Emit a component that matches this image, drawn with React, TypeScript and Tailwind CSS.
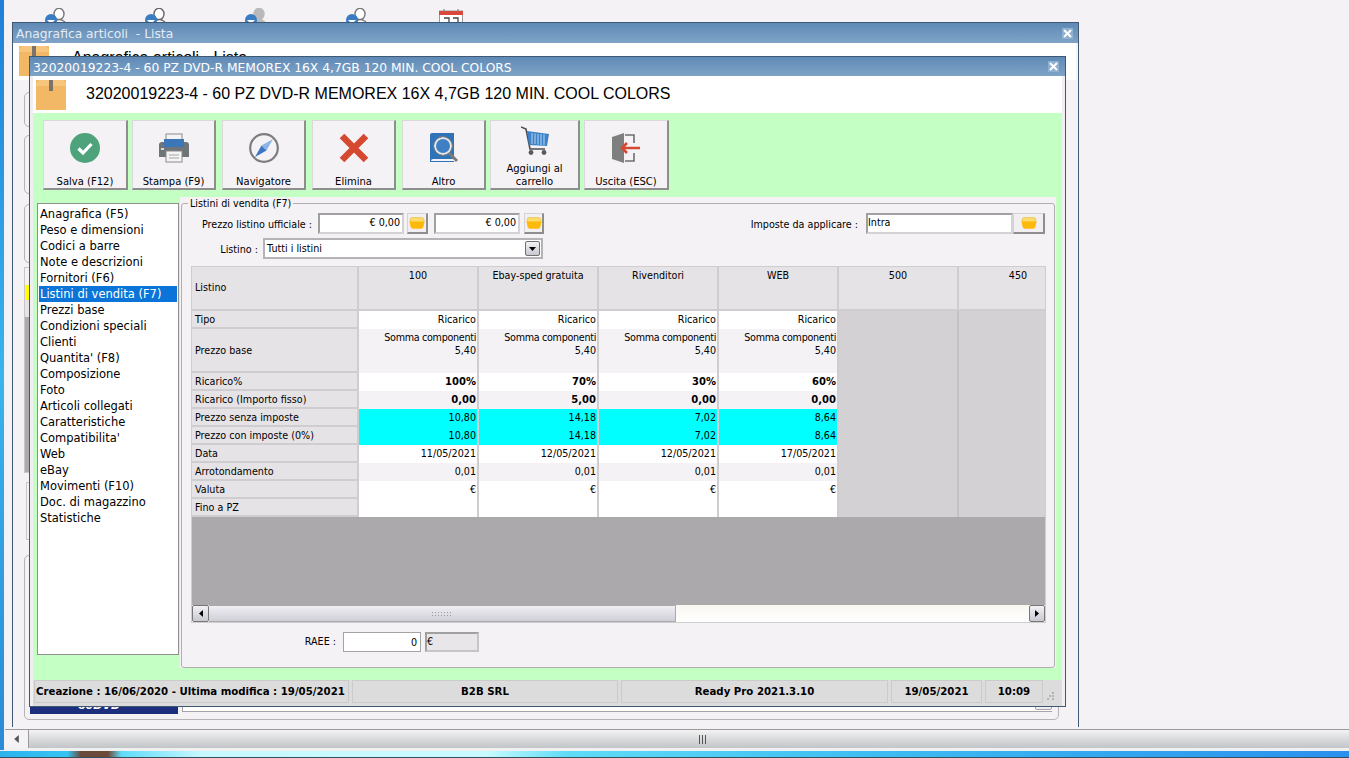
import type { ReactNode } from "react";

const Box = ({ className }: { className: string }) => (
  <svg viewBox="0 0 30 30" className={className}>
    <rect x="0" y="0" width="30" height="30" fill="#f2b866" />
    <path d="M0 4 L3 0 H27 L30 4 V6 H0 Z" fill="#f6c67f" />
    <rect x="13" y="0" width="4" height="11" fill="#7c7468" />
  </svg>
);

const Folder = () => (
  <svg viewBox="0 0 16 12" className="h-[12px] w-[16px]">
    <path d="M1 3 Q1 0.5 3.5 0.5 H12.5 Q15 0.5 15 3 V6 H1 Z" fill="#fbdc6a" stroke="#e8b93a" strokeWidth="0.6" />
    <path d="M0.5 4.5 H15.5 L14.4 10 Q14 11.7 12 11.7 H4 Q2 11.7 1.6 10 Z" fill="#ffb90a" />
  </svg>
);

const Check = () => (
  <svg viewBox="0 0 30 30" className="h-[30px] w-[30px]">
    <circle cx="15" cy="15" r="15" fill="#4ea37c" />
    <path d="M8.5 15.5 L13 20 L21.5 11" fill="none" stroke="#fff" strokeWidth="3.2" />
  </svg>
);

const Printer = () => (
  <svg viewBox="0 0 30 30" className="h-[30px] w-[30px]">
    <rect x="7" y="1" width="16" height="9" fill="#f4f4f4" stroke="#8a8a8a" />
    <path d="M0 12 Q0 9 3 9 H27 Q30 9 30 12 V24 H0 Z" fill="#6f7478" />
    <rect x="5" y="6" width="20" height="8" fill="#3a76b8" />
    <rect x="2" y="15" width="3" height="2" fill="#d8d8d8" />
    <rect x="7" y="18" width="16" height="11" fill="#f4f4f4" stroke="#8a8a8a" />
    <path d="M10 22 H20 M10 25 H20" stroke="#a5a5a5" />
  </svg>
);

const Compass = () => (
  <svg viewBox="0 0 30 30" className="h-[30px] w-[30px]">
    <circle cx="15" cy="15" r="13.8" fill="#f5f2f6" stroke="#7d7d7d" strokeWidth="2.2" />
    <path d="M24 6 L17.5 17.5 L12.5 12.5 Z" fill="#8db4e2" />
    <path d="M6 24 L12.5 12.5 L17.5 17.5 Z" fill="#3a76c4" />
  </svg>
);

const Cross = () => (
  <svg viewBox="0 0 30 30" className="h-[30px] w-[30px]">
    <path d="M3 3 L27 27 M27 3 L3 27" stroke="#d4492f" strokeWidth="6.5" />
  </svg>
);

const BookSearch = () => (
  <svg viewBox="0 0 30 30" className="h-[30px] w-[30px]">
    <path d="M1 2 Q1 0 3 0 H25 V26 H4 Q2 26 2 28 H25 V29 H1 Z" fill="#2f74b9" />
    <circle cx="14" cy="13" r="8" fill="#3f80c4" stroke="#e8e8e8" strokeWidth="2" />
    <circle cx="14" cy="13" r="9.5" fill="none" stroke="#7b7b7b" />
    <path d="M20 20 L28 28" stroke="#7b7b7b" strokeWidth="3" />
  </svg>
);

const Cart = () => (
  <svg viewBox="0 0 28 29" className="h-[29px] w-[28px]">
    <path d="M0 1 L5 3 L9 23 H24" fill="none" stroke="#4d4d4d" strokeWidth="1.6" />
    <path d="M6 5 L28 8 L26 20 L8 19 Z" fill="#3c82c9" />
    <path d="M11 7 V18 M14 7.5 V18 M17 8 V18.5 M20 8 V19 M23 8.5 V19" stroke="#bcd6ef" />
    <circle cx="10" cy="26.5" r="2.4" fill="#5a5a5a" />
    <circle cx="23" cy="26.5" r="2.4" fill="#5a5a5a" />
  </svg>
);

const Exit = () => (
  <svg viewBox="0 0 28 30" className="h-[30px] w-[28px]">
    <path d="M0 4 L12 0 V30 L0 26 Z" fill="#7f7f7f" />
    <path d="M13 2 H22 V10 M22 20 V28 H13" fill="none" stroke="#6f6f6f" strokeWidth="1.6" />
    <path d="M28 15 H10 M15 10 L10 15 L15 20" fill="none" stroke="#d4492f" strokeWidth="2.6" />
  </svg>
);

// head and shoulders of the shortcut icons, cut off by the window below
const Person = ({ head, line }: { head: string; line: string }) => (
  <svg viewBox="0 0 22 14" className="h-[14px] w-[22px]">
    <ellipse cx="14" cy="6" rx="5" ry="5.6" fill={head} stroke={line} strokeWidth="1.4" />
    <path d="M9 14 Q14 9 20 14" fill={head} stroke={line} strokeWidth="1.2" />
    <circle cx="6" cy="12" r="6" fill="#3a7cc4" />
    <path d="M2 12 H10 L8 14 H4 Z" fill="#fff" />
  </svg>
);

const Calendar = () => (
  <svg viewBox="0 0 24 13" className="h-[13px] w-[24px]">
    <rect x="0.5" y="2" width="23" height="12" fill="#fff" stroke="#999" />
    <rect x="0" y="2" width="24" height="4" fill="#d9483b" />
    <path d="M5 0 V3 M19 0 V3" stroke="#777" />
    <path d="M5 9 H10 V13 M14 9 H19 V13" fill="none" stroke="#444" strokeWidth="1.3" />
  </svg>
);

const tools = [
  { label: "Salva (F12)", icon: <Check />, cls: "w-[85px] mr-[4px]" },
  { label: "Stampa (F9)", icon: <Printer />, cls: "w-[84px] mr-[6px]" },
  { label: "Navigatore", icon: <Compass />, cls: "w-[84px] mr-[6px]" },
  { label: "Elimina", icon: <Cross />, cls: "w-[84px] mr-[6px]" },
  { label: "Altro", icon: <BookSearch />, cls: "w-[84px] mr-[4px]" },
  { label: "Aggiungi al carrello", icon: <Cart />, cls: "w-[90px] mr-[4px]", two: true },
  { label: "Uscita (ESC)", icon: <Exit />, cls: "w-[85px]" },
];

const menu = [
  "Anagrafica (F5)", "Peso e dimensioni", "Codici a barre", "Note e descrizioni", "Fornitori (F6)",
  "Listini di vendita (F7)", "Prezzi base", "Condizioni speciali", "Clienti", "Quantita' (F8)",
  "Composizione", "Foto", "Articoli collegati", "Caratteristiche", "Compatibilita'", "Web", "eBay",
  "Movimenti (F10)", "Doc. di magazzino", "Statistiche",
];

const columns = [
  { name: "100", base: "5,40", ric: "100%", imp: "0,00", net: "10,80", date: "11/05/2021" },
  { name: "Ebay-sped gratuita", base: "5,40", ric: "70%", imp: "5,00", net: "14,18", date: "12/05/2021" },
  { name: "Rivenditori", base: "5,40", ric: "30%", imp: "0,00", net: "7,02", date: "12/05/2021" },
  { name: "WEB", base: "5,40", ric: "60%", imp: "0,00", net: "8,64", date: "17/05/2021" },
];

const rowLabels = [
  "Tipo", "Prezzo base", "Ricarico%", "Ricarico (Importo fisso)", "Prezzo senza imposte",
  "Prezzo con imposte (0%)", "Data", "Arrotondamento", "Valuta", "Fino a PZ",
];

const Head = ({ children, className = "" }: { children?: ReactNode; className?: string }) => (
  <div className={"border-b-2 border-r-2 border-[#cfcdcf] bg-[#e6e3e6] " + className}>{children}</div>
);

const Val = ({ children, className = "" }: { children?: ReactNode; className?: string }) => (
  <div className={"border-r-2 border-[#cfcdcf] pr-[1px] text-right leading-[17px] " + className}>{children}</div>
);

const FolderBtn = ({ className }: { className: string }) => (
  <div className={"flex h-[21px] items-center justify-center border border-b-2 border-r-2 border-[#d5d3d5] border-b-[#8e8e8e] border-r-[#8e8e8e] bg-[#f2eff3] " + className}>
    <Folder />
  </div>
);

const Input = ({ children, className }: { children?: ReactNode; className: string }) => (
  <div className={"h-[21px] border-2 border-[#d4d2d4] border-l-[#a0a0a0] border-t-[#a0a0a0] bg-white " + className}>{children}</div>
);

const TitleBar = ({ title, className }: { title: string; className: string }) => (
  <div className={"flex items-center justify-between bg-gradient-to-b from-[#5f8ab6] to-[#7fa3c7] pl-[3px] " + className}>
    <span className="whitespace-pre pt-[3px]">{title}</span>
    <span className="flex h-[11px] w-[11px] items-center justify-center bg-[#8fb0d0]">
      <svg viewBox="0 0 9 9" className="h-[9px] w-[9px]">
        <path d="M1 1 L8 8 M8 1 L1 8" stroke="#fff" strokeWidth="2" />
      </svg>
    </span>
  </div>
);

const PeekBox = ({ className }: { className: string }) => (
  <div className={"rounded-[5px] border border-[#b5b3b5] " + className} />
);

export default function App() {
  return (
    <div className="relative flex h-[758px] w-[1349px] flex-col overflow-hidden bg-[#f5f2f6] font-['DejaVu_Sans',sans-serif] text-[10px] text-black">
      {/* wallpaper visible on the left edge */}
      <div className="absolute left-0 top-0 h-[750px] w-[4px] bg-gradient-to-b from-[#1f7fd8] via-[#39b4ee] to-[#2a8ad6]" />

      <div className="flex h-[22px] overflow-hidden pl-[45px] pt-[8px]">
        <div className="w-[100px]"><Person head="#fff" line="#777" /></div>
        <div className="w-[100px]"><Person head="#fff" line="#666" /></div>
        <div className="w-[101px]"><Person head="#b9b9b9" line="#b9b9b9" /></div>
        <div className="w-[93px]"><Person head="#fff" line="#777" /></div>
        <div className="pt-[1px]"><Calendar /></div>
      </div>

      <div className="h-[707px]" />

      {/* list window, behind */}
      <div className="absolute left-[12px] top-[22px] flex h-[705px] w-[1067px] flex-col border-x border-t border-[#3f5873] bg-[#f5f2f6]">
        <TitleBar title="Anagrafica articoli  - Lista" className="h-[20px] shrink-0 pr-[5px] text-[12.3px] text-[#e4ebf3]" />
        <div className="mr-[2px] flex h-[37px] shrink-0 items-start gap-[23px] bg-white pl-[6px] pt-[3px]">
          <Box className="h-[30px] w-[30px]" />
          <span className="block h-[10px] overflow-hidden font-['Liberation_Sans',sans-serif] text-[16px] leading-[24px]">Anagrafica articoli - Lista</span>
        </div>
        <div className="flex flex-col pl-[11px] pr-[19px]">
          <PeekBox className="mt-[12px] h-[35px]" />
          <PeekBox className="mt-[8px] h-[59px]" />
          <PeekBox className="mt-[10px] h-[59px]" />
          <div className="mt-[4px] flex h-[206px] flex-col border border-[#c8c6c8] bg-[#aba9ab]">
            <div className="h-[17px] bg-[#f5f2f6]" />
            <div className="h-[15px] bg-[#ffff00]" />
            <div className="h-[17px] bg-[#e6e3e6]" />
          </div>
          <div className="mt-[9px] ml-[2px] h-[58px] border border-[#c8c6c8]" />
          <div className="mt-[15px] flex h-[165px] items-end gap-[4px] rounded-[5px] border border-[#b5b3b5] pb-[5px] pl-[5px] pr-[6px]">
            <div className="flex h-[40px] w-[148px] items-end justify-center bg-[#1d2f7c] pb-[3px] pr-[10px] text-[11px] font-bold italic leading-[11px] text-white">60DVD</div>
            <div className="relative mb-[2px] h-[40px] flex-1 border-b border-l border-[#a5a3a5] bg-white">
              <div className="absolute bottom-[1px] right-0 h-[10px] w-[17px] rounded-[2px] border border-[#a5a3a5] bg-[#f2eff3]" />
            </div>
          </div>
        </div>
      </div>

      {/* article window */}
      <div className="absolute left-[29px] top-[56px] flex h-[651px] w-[1037px] flex-col border border-[#3f5873] bg-[#f0eef2]">
        <TitleBar title="32020019223-4 - 60 PZ DVD-R MEMOREX 16X 4,7GB 120 MIN. COOL COLORS" className="h-[19px] shrink-0 pr-[6px] text-[12.3px] text-white" />
        <div className="ml-[3px] mr-[3px] flex min-h-0 flex-1 flex-col">
          <div className="flex h-[37px] shrink-0 items-center gap-[20px] bg-white pl-[3px]">
            <Box className="h-[30px] w-[30px]" />
            <span className="mb-[2px] font-['Liberation_Sans',sans-serif] text-[16px] font-medium">32020019223-4 - 60 PZ DVD-R MEMOREX 16X 4,7GB 120 MIN. COOL COLORS</span>
          </div>

          <div className="flex h-[567px] shrink-0 flex-col bg-[#c4ffc4]">
            <div className="flex h-[84px] pl-[10px] pt-[7px]">
              {tools.map((t) => (
                <div key={t.label} className={"flex h-[70px] flex-col items-center justify-between border border-b-2 border-r-2 border-[#dad8da] border-b-[#8e8e8e] border-r-[#8e8e8e] bg-[#f5f2f6] " + t.cls}>
                  <div className={t.two ? "mt-[5px]" : "mt-[12px]"}>{t.icon}</div>
                  <div className="text-center leading-[13px]">{t.label}</div>
                </div>
              ))}
            </div>

            <div className="ml-[4px] flex h-[471px]">
              <div className="mt-[6px] h-[452px] w-[142px] border border-[#8f8f8f] bg-white px-[1px] pt-[2px] text-[11.5px]">
                {menu.map((m) => (
                  <div key={m} className={"h-[16px] whitespace-nowrap pl-[1px] leading-[16px] " + (m.startsWith("Listini") ? "bg-[#0a74d8] text-white" : "")}>{m}</div>
                ))}
              </div>

              <div className="ml-[1px] h-full w-[876px] bg-[#f5f2f6] pl-[1px] pt-[6px] text-[9.6px]">
                <div className="relative h-[465px] w-[874px] rounded-[3px] border border-[#b0aeb0] pt-[9px]">
                  <span className="absolute -top-[7px] left-[6px] bg-[#f5f2f6] px-[2px] leading-[13px]">Listini di vendita (F7)</span>

                  <div className="flex items-center">
                    <span className="w-[130px] pt-[3px] text-right">Prezzo listino ufficiale :</span>
                    <Input className="ml-[6px] w-[86px] pr-[2px] text-right leading-[15px]">€ 0,00</Input>
                    <FolderBtn className="ml-[3px] w-[21px]" />
                    <Input className="ml-[6px] w-[86px] pr-[2px] text-right leading-[15px]">€ 0,00</Input>
                    <FolderBtn className="ml-[4px] w-[20px]" />
                    <span className="ml-auto pt-[3px]">Imposte da applicare :</span>
                    <Input className="ml-[8px] w-[147px] leading-[15px]">Intra</Input>
                    <FolderBtn className="mr-[9px] w-[32px]" />
                  </div>

                  <div className="mt-[4px] flex items-center">
                    <span className="w-[76px] pt-[3px] text-right">Listino :</span>
                    <div className="ml-[5px] flex h-[21px] w-[280px] items-center justify-between border-2 border-[#b5b3b5] bg-white pl-[2px] pr-[1px]">
                      <span className="pt-[2px]">Tutti i listini</span>
                      <span className="flex h-[15px] w-[15px] items-center justify-center rounded-[2px] border border-[#6f6f6f] bg-gradient-to-b from-[#f2f1f5] to-[#c9c9d2]">
                        <svg viewBox="0 0 7 4" className="h-[4px] w-[7px]"><path d="M0 0 H7 L3.5 4 Z" fill="#000" /></svg>
                      </span>
                    </div>
                  </div>

                  <div className="ml-[9px] mt-[7px] w-[855px] border border-[#cfcdcf]">
                    <div className="h-[338px] overflow-hidden bg-[#aba9ab]">
                      <div className="grid grid-cols-[167px_120px_120px_120px_120px_120px_120px] grid-rows-[44px_18px_44px_repeat(8,18px)]">
                        <Head className="flex items-center pl-[3px] pt-[1px]">Listino</Head>
                        {[...columns.map((c) => c.name), "500", "450"].map((n) => (
                          <Head key={n} className="pt-[2px] text-center">{n}</Head>
                        ))}

                        {rowLabels.map((label, r) => (
                          <div key={label} className="contents">
                            <Head className="flex items-center pl-[3px] pt-[2px]">{label}</Head>
                            {columns.map((c) => {
                              const tint = r === 4 || r === 5 ? "bg-[#00ffff]" : r === 1 || r === 3 || r === 7 ? "bg-[#f5f2f6]" : "bg-white";
                              const values = [
                                "Ricarico",
                                <span key="b" className="block pt-[2px] leading-[13px]"><span className="tracking-[-0.3px]">Somma componenti</span><br />{c.base}</span>,
                                c.ric, c.imp, c.net, c.net, c.date, "0,01", "€", "",
                              ];
                              return (
                                <Val key={c.name} className={tint + (r === 2 || r === 3 ? " text-[10px] font-bold" : "")}>{values[r]}</Val>
                              );
                            })}
                            <div className="border-r-2 border-[#c4c2c4] bg-[#d3d1d3]" />
                            <div className="bg-[#d3d1d3]" />
                          </div>
                        ))}
                      </div>
                    </div>

                    <div className="flex h-[17px] bg-gradient-to-b from-[#f8f7f0] to-white">
                      <div className="flex w-[17px] items-center justify-center rounded-[2px] border border-[#777] bg-gradient-to-b from-[#f2f1f5] to-[#c9c9d2]">
                        <svg viewBox="0 0 4 7" className="h-[7px] w-[4px]"><path d="M4 0 V7 L0 3.5 Z" fill="#000" /></svg>
                      </div>
                      <div className="flex w-[467px] items-center justify-center border-y border-r border-[#aaa] bg-gradient-to-b from-[#f0eff4] to-[#cfcfd8]">
                        <span className="h-[5px] w-[22px] bg-[radial-gradient(#9a9a9a_1px,transparent_1px)] bg-[length:3px_3px]" />
                      </div>
                      <div className="flex-1" />
                      <div className="flex w-[16px] items-center justify-center rounded-[2px] border border-[#777] bg-gradient-to-b from-[#f2f1f5] to-[#c9c9d2]">
                        <svg viewBox="0 0 4 7" className="h-[7px] w-[4px]"><path d="M0 0 V7 L4 3.5 Z" fill="#000" /></svg>
                      </div>
                    </div>
                  </div>

                  <div className="mt-[9px] flex items-center">
                    <span className="w-[154px] pt-[1px] text-right">RAEE :</span>
                    <div className="ml-[7px] h-[20px] w-[78px] border border-[#a5a3a5] bg-white pr-[3px] text-right leading-[20px]">0</div>
                    <div className="ml-[4px] h-[20px] w-[54px] border-2 border-[#c6c4c6] border-l-[#a0a0a0] border-t-[#a0a0a0] bg-[#e9e6e9] leading-[15px]">€</div>
                  </div>
                </div>
              </div>
            </div>
          </div>

          <div className="flex h-[26px] shrink-0 items-start bg-[#dcdcdc] pl-[1px] text-[10.2px] font-bold">
            <div className="flex h-[23px] w-[315px] items-center whitespace-nowrap border border-[#cbcbcb] pl-[1px] pt-[1px]">Creazione : 16/06/2020 - Ultima modifica : 19/05/2021</div>
            <div className="ml-[3px] flex h-[23px] w-[266px] items-center justify-center border border-[#cbcbcb] pt-[1px]">B2B SRL</div>
            <div className="ml-[3px] flex h-[23px] w-[267px] items-center justify-center border border-[#cbcbcb] pt-[1px]">Ready Pro 2021.3.10</div>
            <div className="ml-[3px] flex h-[23px] w-[91px] items-center justify-center border border-[#cbcbcb] pt-[1px]">19/05/2021</div>
            <div className="ml-[3px] flex h-[23px] w-[58px] items-center justify-center border border-[#cbcbcb] pt-[1px]">10:09</div>
            <svg viewBox="0 0 8 8" className="ml-[4px] mt-[12px] h-[8px] w-[8px]">
              <path d="M5 0 H7 V2 H5 Z M2 3 H4 V5 H2 Z M5 3 H7 V5 H5 Z M0 6 H2 V8 H0 Z M5 6 H7 V8 H5 Z" fill="#b4b4b4" />
            </svg>
          </div>
        </div>
      </div>

      {/* application scrollbar */}
      <div className="ml-[5px] flex h-[19px] shrink-0 border-t border-[#9a9a9a]">
        <div className="flex w-[23px] items-center justify-center bg-[#f5f2f6]">
          <svg viewBox="0 0 4 7" className="h-[8px] w-[5px]"><path d="M4 0 V7 L0 3.5 Z" fill="#555" /></svg>
        </div>
        <div className="flex flex-1 items-center justify-center border-l border-[#9a9a9a] bg-gradient-to-b from-[#f3f3f3] via-[#d9dbdd] to-[#c2c5c8]">
          <svg viewBox="0 0 9 9" className="ml-[26px] h-[9px] w-[9px]"><path d="M1.5 0 V9 M4.5 0 V9 M7.5 0 V9" stroke="#555" /></svg>
        </div>
      </div>
      <div className="h-[3px] shrink-0 bg-[#f0f0f0]" />
      <div className="h-[6px] shrink-0 bg-[linear-gradient(90deg,#2db2ee_0%,#35c4f2_5%,#6b4a3a_6%,#6b4a3a_8%,#5fdcf8_9%,#c8f8ff_15%,#c8fbff_36%,#5fdcf8_42%,#3dbcf2_65%,#2a90ee_100%)]" />
      <div className="h-px shrink-0 bg-[#33505c]" />
    </div>
  );
}
